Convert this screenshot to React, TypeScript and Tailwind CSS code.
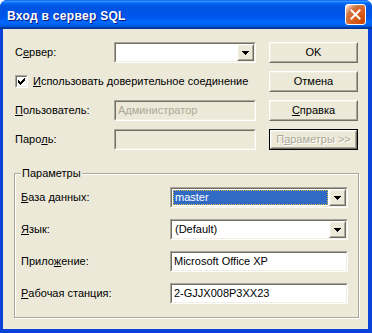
import React from "react";

type P = { children?: React.ReactNode; className?: string; inner?: string };

function Sunken({ children, className = "", inner = "" }: P) {
  return (
    <div className={`border border-t-[#ACA899] border-l-[#ACA899] border-b-white border-r-white ${className}`}>
      <div className={`h-full border border-t-[#716F64] border-l-[#716F64] border-b-[#F1EFE2] border-r-[#F1EFE2] ${inner}`}>
        {children}
      </div>
    </div>
  );
}

function Raised({ children, className = "", inner = "" }: P) {
  return (
    <div className={`border border-t-white border-l-white border-b-[#716F64] border-r-[#716F64] bg-[#ECE9D8] ${className}`}>
      <div className={`h-full border border-t-[#F1EFE2] border-l-[#F1EFE2] border-b-[#ACA899] border-r-[#ACA899] ${inner}`}>
        {children}
      </div>
    </div>
  );
}

function Arrow() {
  return (
    <svg width="7" height="4" viewBox="0 0 7 4" shapeRendering="crispEdges">
      <rect x="0" y="0" width="7" height="1" fill="#000" />
      <rect x="1" y="1" width="5" height="1" fill="#000" />
      <rect x="2" y="2" width="3" height="1" fill="#000" />
      <rect x="3" y="3" width="1" height="1" fill="#000" />
    </svg>
  );
}

function Combo({ children, className = "", selected = false }: P & { selected?: boolean }) {
  return (
    <Sunken className={`h-[21px] ${className}`} inner="bg-white flex">
      <div className="flex-1 flex items-center p-[1px] min-w-0">
        {selected ? (
          <div className="h-full flex-1 flex items-center bg-[#316AC5] text-white border border-dotted border-[#E8C040] pl-[1px]">
            {children}
          </div>
        ) : (
          <div className="pl-[2px]">{children}</div>
        )}
      </div>
      <Raised className="w-[17px] h-full" inner="flex items-center justify-center">
        <Arrow />
      </Raised>
    </Sunken>
  );
}

function Btn({ children, def = false }: P & { def?: boolean }) {
  if (def) {
    return (
      <div className="h-[21px] border border-black">
        <Raised className="h-full" inner="flex items-center justify-center">
          {children}
        </Raised>
      </div>
    );
  }
  return (
    <Raised className="h-[21px]" inner="flex items-center justify-center">
      {children}
    </Raised>
  );
}

function Check() {
  return (
    <Sunken className="w-[13px] h-[13px]" inner="bg-white flex items-center justify-center">
      <svg width="7" height="7" viewBox="0 0 7 7" shapeRendering="crispEdges">
        <rect x="6" y="0" width="1" height="3" fill="#000" />
        <rect x="5" y="1" width="1" height="3" fill="#000" />
        <rect x="4" y="2" width="1" height="3" fill="#000" />
        <rect x="3" y="3" width="1" height="3" fill="#000" />
        <rect x="2" y="4" width="1" height="3" fill="#000" />
        <rect x="1" y="3" width="1" height="3" fill="#000" />
        <rect x="0" y="2" width="1" height="3" fill="#000" />
      </svg>
    </Sunken>
  );
}

const U = ({ children }: P) => <span className="underline underline-offset-[1px]">{children}</span>;

export default function App() {
  return (
    <div className="w-[372px] h-[333px] font-['Liberation_Sans',Arial,sans-serif] text-[11px] leading-[13px] text-black select-none">
      <div className="w-full h-full flex flex-col bg-[#0842D8] rounded-t-[7px] overflow-hidden">
        {/* Title bar */}
        <div className="h-[29px] shrink-0 flex items-center pl-[7px] pr-[6px] bg-[linear-gradient(180deg,#0058ee_0%,#3a93ff_4%,#288eff_6%,#127dff_8%,#036ffc_10%,#0262ee_14%,#0057e5_20%,#0054e3_24%,#0055eb_56%,#005bf5_66%,#026afe_76%,#0062ef_86%,#0052d6_92%,#0040ab_94%,#003092_100%)]">
          <div className="flex-1 text-white font-bold text-[12px] tracking-[0.3px] [text-shadow:1px_1px_0_#0A1883] pt-[3px]">
            Вход в сервер SQL
          </div>
          <div className="w-[21px] h-[21px] rounded-[3px] border border-white bg-[radial-gradient(circle_at_90%_90%,#cc4600_0%,#dc6527_55%,#cd7546_70%,#ffccb2_90%,#ffffff_100%)] flex items-center justify-center">
            <svg width="11" height="11" viewBox="0 0 11 11">
              <path d="M1.5 1.5 L9.5 9.5 M9.5 1.5 L1.5 9.5" stroke="#fff" strokeWidth="2" strokeLinecap="square" />
            </svg>
          </div>
        </div>

        {/* Body */}
        <div className="flex-1 ml-[3px] mr-[4px] mb-[4px] bg-[#ECE9D8] flex flex-col">
          <div className="flex pt-[13px] pl-[12px]">
            <div className="grid grid-cols-[99px_142px] auto-rows-[21px] gap-y-[8px]">
              <div className="flex items-center">
                С<U>е</U>рвер:
              </div>
              <Combo>{""}</Combo>
              <div className="col-span-2 flex items-center gap-[5px]">
                <Check />
                <span>
                  <U>И</U>спользовать доверительное соединение
                </span>
              </div>
              <div className="flex items-center">
                <U>П</U>ользователь:
              </div>
              <Sunken className="h-[21px]" inner="bg-[#ECE9D8] flex items-center pl-[2px] text-[#ACA899]">
                Администратор
              </Sunken>
              <div className="flex items-center">
                Паро<U>л</U>ь:
              </div>
              <Sunken className="h-[21px]" inner="bg-[#ECE9D8]" />
            </div>
            <div className="ml-[13px] w-[89px] flex flex-col gap-[8px]">
              <Btn>OK</Btn>
              <Btn>Отмена</Btn>
              <Btn>
                <span>
                  <U>С</U>правка
                </span>
              </Btn>
              <Btn def>
                <span className="text-[#ACA899] [text-shadow:1px_1px_0_#fff]">
                  П<U>а</U>раметры &gt;&gt;
                </span>
              </Btn>
            </div>
          </div>

          <div className="relative mt-[23px] ml-[11px] w-[345px] border border-[#ACA899] shadow-[inset_1px_1px_0_#fff,1px_1px_0_#fff] pt-[13px] pb-[13px] pl-[6px]">
            <div className="absolute left-[6px] -top-[7px] px-[1px] bg-[#ECE9D8]">Параметры</div>
            <div className="grid grid-cols-[149px_178px] auto-rows-[21px] gap-y-[11px]">
              <div className="flex items-center">
                <U>Б</U>аза данных:
              </div>
              <Combo selected>master</Combo>
              <div className="flex items-center">
                <U>Я</U>зык:
              </div>
              <Combo>(Default)</Combo>
              <div className="flex items-center">
                Прило<U>ж</U>ение:
              </div>
              <Sunken className="h-[21px]" inner="bg-white flex items-center pl-[2px]">
                Microsoft Office XP
              </Sunken>
              <div className="flex items-center">
                <U>Р</U>абочая станция:
              </div>
              <Sunken className="h-[21px]" inner="bg-white flex items-center pl-[2px]">
                2-GJJX008P3XX23
              </Sunken>
            </div>
          </div>
        </div>
      </div>
    </div>
  );
}
